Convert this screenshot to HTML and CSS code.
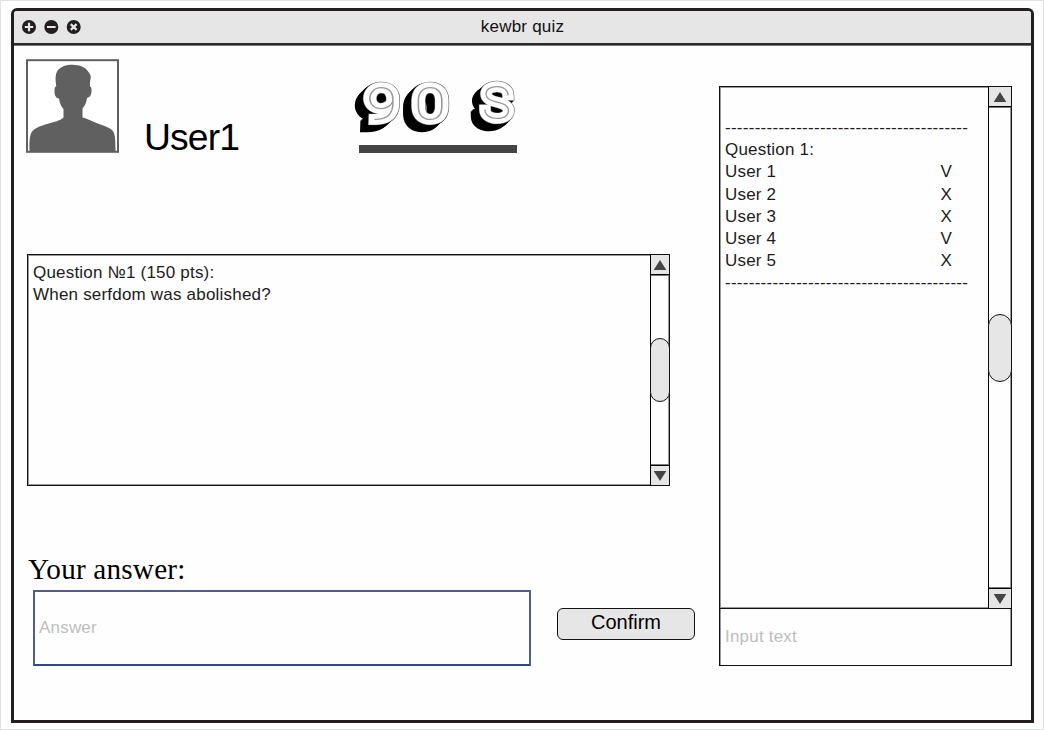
FILE: index.html
```html
<!DOCTYPE html>
<html lang="en">
<head>
<meta charset="utf-8">
<title>kewbr quiz</title>
<link rel="stylesheet" href="styles.css">
</head>
<body>
<div class="window">
  <header class="titlebar">
    <svg class="controls" width="60" height="16" viewBox="0 0 60 16">
      <g fill="#231f20"><circle cx="8" cy="8" r="7"/><circle cx="30.3" cy="8" r="7"/><circle cx="52.7" cy="8" r="7"/></g>
      <g stroke="#e6e6e6" stroke-width="2.2" fill="none"><path d="M8 3.8v8.4M3.8 8h8.4M26 8h8.6M49.8 5.1l5.8 5.8M55.6 5.1l-5.8 5.8"/></g>
    </svg>
    <span class="title">kewbr quiz</span>
  </header>
  <main class="content">
    <section class="play">
      <div class="profile">
        <svg class="avatar" width="93" height="94" viewBox="0 0 93 94">
          <rect x="1" y="1.2" width="91" height="91.6" fill="#fff" stroke="#606060" stroke-width="2"/>
          <path fill="#606060" d="M3.500 92C3.300 84 3.500 78 5 74.500C7 69.500 14 67 21 65C28 63 35 61.500 37.500 58.500V50C35 47 33.500 43.500 33 39.500C30 39.500 28.500 36 28.500 32.500C28.400 29 28.800 27.700 30.300 27.500C29.500 22 29 16.500 31 12.500C34 7.500 40 5.700 46.500 5.700C54 5.700 60 8.500 62.500 13C65 16 65 18 64.500 20C63.900 23 64 25 63.900 27.500C65.500 27.700 65.800 30 65.500 33C65.200 36.500 63.500 38.500 61 39C60.500 43 59 47 56.500 49.500V58.500C62 59.800 66 62.500 73 65C81 67.500 86.500 70 88 74C89.500 78 89.300 84 89.500 92Z"/>
        </svg>
        <span class="name">User1</span>
        <svg class="logo" width="174" height="84" viewBox="350 75 174 84">
          <defs>
            <g id="mark" class="mark">
              <g transform="translate(381.700 119.700) scale(1.200 1)"><text>9</text></g>
              <g transform="translate(430 119.700) scale(1.250 1)"><text>0</text></g>
              <g transform="translate(496.500 119.200) scale(1.050 1)"><text>S</text></g>
            </g>
          </defs>
          <g class="depth">
            <use href="#mark" x="-8" y="7"/><use href="#mark" x="-7" y="6.100"/><use href="#mark" x="-6" y="5.200"/><use href="#mark" x="-5" y="4.400"/><use href="#mark" x="-4" y="3.500"/><use href="#mark" x="-3" y="2.600"/><use href="#mark" x="-2" y="1.700"/><use href="#mark" x="-1" y=".9"/>
          </g>
          <use class="edge" href="#mark"/>
          <use class="face" href="#mark"/>
          <use class="inline" href="#mark"/>
          <rect x="359" y="145" width="158" height="8" fill="#444"/>
        </svg>
      </div>
      <div class="panel question">
        <div class="text">
          <p>Question №1 (150 pts):</p>
          <p>When serfdom was abolished?</p>
        </div>
        <div class="scroll">
          <div class="arrow up"><svg width="14" height="12"><path d="M7 1l6.300 10H.7z" fill="#444"/></svg></div>
          <div class="thumb"></div>
          <div class="arrow down"><svg width="14" height="12"><path d="M7 11L.7 1h12.600z" fill="#444"/></svg></div>
        </div>
      </div>
      <h1 class="label">Your answer:</h1>
      <div class="form">
        <div class="answer">Answer</div>
        <button class="confirm">Confirm</button>
      </div>
    </section>
    <aside class="side">
      <div class="panel log">
        <div class="text">
          <p class="rule">-----------------------------------------</p>
          <p>Question 1:</p>
          <p class="row"><span>User 1</span><span>V</span></p>
          <p class="row"><span>User 2</span><span>X</span></p>
          <p class="row"><span>User 3</span><span>X</span></p>
          <p class="row"><span>User 4</span><span>V</span></p>
          <p class="row"><span>User 5</span><span>X</span></p>
          <p class="rule">-----------------------------------------</p>
        </div>
        <div class="scroll">
          <div class="arrow up"><svg width="14" height="12"><path d="M7 1l6.300 10H.7z" fill="#444"/></svg></div>
          <div class="thumb"></div>
          <div class="arrow down"><svg width="14" height="12"><path d="M7 11L.7 1h12.600z" fill="#444"/></svg></div>
        </div>
      </div>
      <div class="message">Input text</div>
    </aside>
  </main>
</div>
</body>
</html>
```
FILE: styles.css
```css
* { box-sizing: border-box; }
body {
  margin: 0;
  width: 1044px;
  height: 730px;
  padding: 7px 0 0 10px;
  border: 1px solid #e2e2e2;
  background: #fff;
  overflow: hidden;
  font: 17px/22.2px "Liberation Sans", Arial, sans-serif;
  letter-spacing: .2px;
  color: #1c1c1c;
}
p, h1 { margin: 0; }
svg { display: block; }
.window {
  width: 1023px;
  height: 715px;
  border: 3px solid #231f20;
  border-radius: 6px 6px 0 0;
  background: #fefefe;
  display: flex;
  flex-direction: column;
}
.titlebar {
  height: 34px;
  flex: none;
  display: grid;
  grid-template-columns: 60px 1fr 60px;
  padding: 0 7px;
  background: #e6e6e6;
  border-bottom: 2px solid #2b2b2b;
  box-shadow: 0 1px #777;
  border-radius: 3px 3px 0 0;
}
.controls { margin-top: 8px; }
.title { text-align: center; margin-top: 5px; color: #111; }
.content { display: flex; padding: 14px 0 0 12px; }
.play { width: 693px; }
.profile { display: flex; height: 94px; }
.name {
  width: 206px;
  margin-left: 25px;
  padding-top: 57px;
  font-size: 37.3px;
  line-height: 42px;
  letter-spacing: -.9px;
  color: #000;
}
.avatar { flex: none; }
.logo { flex: none; margin-top: 16px; }
.mark {
  font: 100 47px Roboto, sans-serif;
  text-anchor: middle;
  letter-spacing: 0;
  stroke-linejoin: miter;
  stroke-miterlimit: 3;
}
.depth { fill: #000; stroke: #000; stroke-width: 10.5px; }
.edge { fill: #555; stroke: #555; stroke-width: 10.5px; }
.face { fill: #fff; stroke: #fff; stroke-width: 9.5px; }
.inline { fill: #999; }
.panel {
  display: flex;
  justify-content: space-between;
  border: 1px solid #111;
  box-shadow: inset 0 0 0 1px #999;
}
.question { margin: 101px 0 0 1px; width: 643px; height: 232px; }
.question .text { padding: 7px 0 0 5px; }
.scroll {
  width: 23px;
  border-left: 1px solid #000;
  display: flex;
  flex-direction: column;
  justify-content: space-between;
}
.question .scroll { width: 19px; }
.arrow {
  height: 20px;
  background: #e6e6e6;
  display: flex;
  align-items: center;
  justify-content: center;
}
.up { border-bottom: 1px solid #000; box-shadow: 0 1px #777; }
.down { border-top: 1px solid #000; box-shadow: 0 -1px #777; }
.thumb {
  height: 68px;
  margin: 0 -1px;
  border: 1px solid #111;
  border-radius: 12px;
  background: #e6e6e6;
}
.question .thumb { height: 64px; border-radius: 10px; }
.label {
  margin: 66px 0 0 2px;
  font: 29.2px/34px "Liberation Serif", "Times New Roman", serif;
  letter-spacing: .2px;
  color: #000;
}
.form { display: flex; align-items: flex-start; margin: 4px 0 0 7px; }
.answer {
  width: 498px;
  height: 76px;
  border: 2px solid #4c6096;
  border-bottom-color: #35477f;
  padding: 25px 4px;
  color: #bebebe;
}
.confirm {
  width: 138px;
  height: 32px;
  margin: 18px 0 0 26px;
  padding: 0 0 5px;
  border: 1px solid #111;
  border-radius: 6px;
  background: #e6e6e6;
  color: #000;
  font: 20px/24px "Liberation Sans", Arial, sans-serif;
  letter-spacing: 0;
}
.side { width: 293px; padding-top: 27px; }
.log { height: 523px; }
.log .text { padding: 30px 0 0 5px; }
.rule { letter-spacing: .27px; }
.row { display: flex; justify-content: space-between; width: 227px; }
.message {
  height: 57px;
  border: 1px solid #111;
  border-top: 0;
  box-shadow: inset 1px 0 #999, inset -1px 0 #999;
  padding: 17px 5px;
  color: #bebebe;
}
```
